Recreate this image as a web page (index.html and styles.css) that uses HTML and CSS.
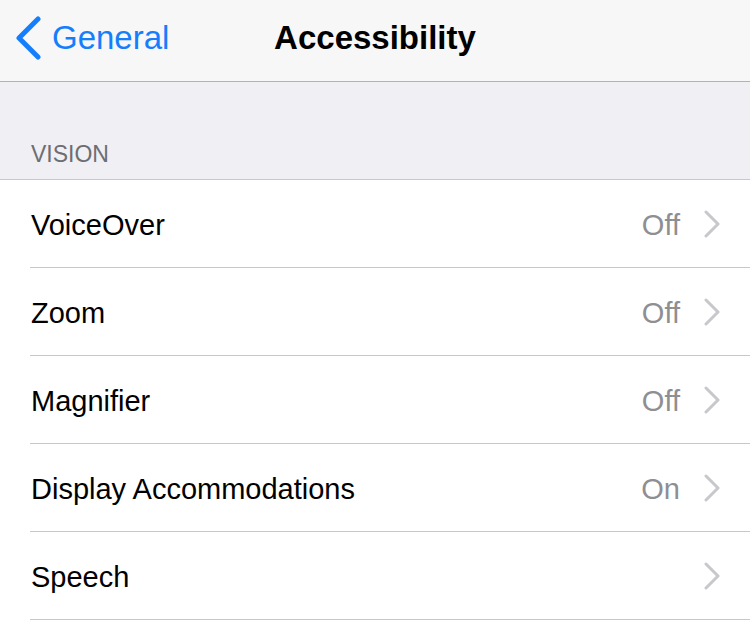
FILE: index.html
```html
<!DOCTYPE html>
<html>
<head>
<meta charset="utf-8">
<link rel="stylesheet" href="styles.css">
</head>
<body>
<header class="nav">
  <a class="back">
    <svg class="back-icon" width="30" height="44" viewBox="0 0 30 44"><path d="M22 3 L3 22 L22 41" fill="none" stroke="#157efb" stroke-width="5" stroke-linecap="round" stroke-linejoin="round"/></svg>
    <span>General</span>
  </a>
  <h1 class="title">Accessibility</h1>
  <div class="spacer"></div>
</header>
<section class="group-header">VISION</section>
<ul class="list">
  <li class="row"><span class="label">VoiceOver</span><span class="value">Off</span><svg class="chev" width="16" height="28" viewBox="0 0 16 28"><path d="M2 2 L14 14 L2 26" fill="none" stroke="#c7c7cc" stroke-width="3" stroke-linecap="round" stroke-linejoin="round"/></svg></li>
  <li class="row"><span class="label">Zoom</span><span class="value">Off</span><svg class="chev" width="16" height="28" viewBox="0 0 16 28"><path d="M2 2 L14 14 L2 26" fill="none" stroke="#c7c7cc" stroke-width="3" stroke-linecap="round" stroke-linejoin="round"/></svg></li>
  <li class="row"><span class="label">Magnifier</span><span class="value">Off</span><svg class="chev" width="16" height="28" viewBox="0 0 16 28"><path d="M2 2 L14 14 L2 26" fill="none" stroke="#c7c7cc" stroke-width="3" stroke-linecap="round" stroke-linejoin="round"/></svg></li>
  <li class="row"><span class="label">Display Accommodations</span><span class="value">On</span><svg class="chev" width="16" height="28" viewBox="0 0 16 28"><path d="M2 2 L14 14 L2 26" fill="none" stroke="#c7c7cc" stroke-width="3" stroke-linecap="round" stroke-linejoin="round"/></svg></li>
  <li class="row"><span class="label">Speech</span><svg class="chev" width="16" height="28" viewBox="0 0 16 28"><path d="M2 2 L14 14 L2 26" fill="none" stroke="#c7c7cc" stroke-width="3" stroke-linecap="round" stroke-linejoin="round"/></svg></li>
</ul>
</body>
</html>
```
FILE: styles.css
```css
html, body {
  margin: 0;
  padding: 0;
  background: #ffffff;
  font-family: "Liberation Sans", Arial, sans-serif;
  width: 750px;
  height: 621px;
  overflow: hidden;
}
.nav {
  height: 82px;
  box-sizing: border-box;
  padding-bottom: 6px;
  background: #f7f7f8;
  border-bottom: 1px solid #b2b2b2;
  display: grid;
  grid-template-columns: 1fr auto 1fr;
  align-items: center;
}
.back {
  display: flex;
  align-items: center;
  color: #157efb;
  font-size: 33px;
  padding-left: 16px;
  gap: 6px;
}
.back-icon {
  display: block;
}
.title {
  margin: 0;
  font-size: 33px;
  font-weight: bold;
  color: #000;
}
.group-header {
  height: 98px;
  box-sizing: border-box;
  background: #efeff4;
  color: #6d6d72;
  font-size: 23px;
  padding: 0 0 11px 31px;
  display: flex;
  align-items: flex-end;
  border-bottom: 1px solid #c8c7cc;
}
.list {
  list-style: none;
  margin: 0;
  padding: 0 0 0 30px;
}
.row {
  height: 87px;
  box-sizing: content-box;
  border-bottom: 1px solid #c8c7cc;
  display: flex;
  align-items: center;
  padding-right: 30px;
  font-size: 29px;
}
.label {
  flex: 1;
  color: #000;
  padding-left: 1px;
  padding-top: 3px;
}
.value {
  color: #8e8e93;
  margin-right: 24px;
  padding-top: 3px;
}
.chev {
  display: block;
}
```
